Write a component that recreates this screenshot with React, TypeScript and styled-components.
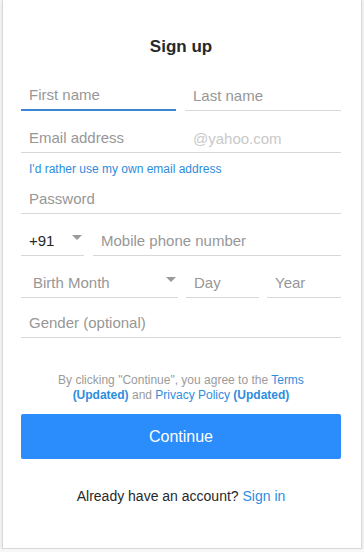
import React from 'react';
import styled, { createGlobalStyle } from 'styled-components';

const GlobalStyle = createGlobalStyle`
  html, body {
    margin: 0;
    padding: 0;
    background: #f7f7f7;
  }
  body {
    font-family: "Liberation Sans", Arial, sans-serif;
    color: #26282a;
  }
  * { box-sizing: border-box; }
`;

const Card = styled.div`
  width: 360px;
  height: 549px;
  margin: 0 0 0 2px;
  background: #fff;
  border: 1px solid #d9d9d9;
  border-top: none;
  box-shadow: 0 1px 3px rgba(0, 0, 0, 0.12);
  padding: 37px 20px 0 18px;
  display: flex;
  flex-direction: column;
`;

const Title = styled.h1`
  margin: 0;
  font-size: 17px;
  line-height: 20px;
  font-weight: 700;
  text-align: center;
  color: #26282a;
`;

const Row = styled.div<{ $top: number }>`
  display: flex;
  margin-top: ${p => p.$top}px;
  gap: 9px;
`;

const Field = styled.div<{ $width?: number; $focused?: boolean }>`
  position: relative;
  flex: ${p => (p.$width ? `0 0 ${p.$width}px` : '1 1 auto')};
  height: 35px;
  border-bottom: ${p => (p.$focused ? '2px solid #3b86d6' : '1px solid #d8d8d8')};
`;

const Input = styled.input`
  width: 100%;
  height: 100%;
  border: none;
  outline: none;
  background: transparent;
  padding: 4px 8px 0;
  font-family: "Liberation Sans", Arial, sans-serif;
  font-size: 15px;
  color: #26282a;
  &::placeholder {
    color: #979797;
  }
`;

const Domain = styled.span`
  position: absolute;
  left: 172px;
  top: 12px;
  font-size: 15px;
  color: #c9c9c9;
`;

const SelectBox = styled.div<{ $indent: number; $dark?: boolean }>`
  height: 100%;
  display: flex;
  align-items: center;
  justify-content: space-between;
  padding: 4px 0 0 ${p => p.$indent}px;
  padding-right: ${p => (p.$dark ? 2 : 2)}px;
  font-size: 15px;
  color: ${p => (p.$dark ? '#26282a' : '#979797')};
`;

const Caret = () => (
  <svg width="10" height="6" viewBox="0 0 10 6" style={{ marginTop: -4 }}>
    <path d="M0 0 L10 0 L5 5 Z" fill="#9a9a9a" />
  </svg>
);

const AltLink = styled.a`
  display: block;
  margin-top: 8px;
  padding-left: 8px;
  font-size: 12px;
  line-height: 16px;
  color: #2e8ddd;
  text-decoration: none;
`;

const Terms = styled.p`
  margin: 35px auto 0;
  width: 270px;
  font-size: 12px;
  line-height: 15px;
  text-align: center;
  color: #9b9b9b;
`;

const TermsLink = styled.a<{ $bold?: boolean }>`
  color: #2e8ddd;
  text-decoration: none;
  font-weight: ${p => (p.$bold ? 700 : 400)};
`;

const ContinueButton = styled.button`
  margin-top: 11px;
  width: 100%;
  height: 45px;
  border: none;
  border-radius: 2px;
  background: #2b8cfb;
  color: #fff;
  font-family: "Liberation Sans", Arial, sans-serif;
  font-size: 16px;
  cursor: pointer;
`;

const SignIn = styled.p`
  margin: 28px 0 0;
  font-size: 14px;
  line-height: 18px;
  text-align: center;
  color: #26282a;
  a {
    color: #2e8ddd;
    text-decoration: none;
  }
`;

export default function App() {
  return (
    <>
      <GlobalStyle />
      <Card>
        <Title>Sign up</Title>

        <Row $top={19}>
          <Field $width={155} $focused>
            <Input placeholder="First name" />
          </Field>
          <Field>
            <Input placeholder="Last name" />
          </Field>
        </Row>

        <Row $top={7}>
          <Field>
            <Input placeholder="Email address" />
            <Domain>@yahoo.com</Domain>
          </Field>
        </Row>
        <AltLink href="#">I'd rather use my own email address</AltLink>

        <Row $top={2}>
          <Field>
            <Input type="password" placeholder="Password" />
          </Field>
        </Row>

        <Row $top={7}>
          <Field $width={63}>
            <SelectBox $indent={8} $dark>
              +91
              <Caret />
            </SelectBox>
          </Field>
          <Field>
            <Input placeholder="Mobile phone number" />
          </Field>
        </Row>

        <Row $top={7} style={{ gap: 8 }}>
          <Field $width={157}>
            <SelectBox $indent={12}>
              Birth Month
              <Caret />
            </SelectBox>
          </Field>
          <Field $width={73}>
            <Input placeholder="Day" />
          </Field>
          <Field>
            <Input placeholder="Year" />
          </Field>
        </Row>

        <Row $top={5}>
          <Field>
            <Input placeholder="Gender (optional)" />
          </Field>
        </Row>

        <Terms>
          By clicking "Continue", you agree to the <TermsLink href="#">Terms</TermsLink>{' '}
          <TermsLink href="#" $bold>(Updated)</TermsLink> and{' '}
          <TermsLink href="#">Privacy Policy</TermsLink>{' '}
          <TermsLink href="#" $bold>(Updated)</TermsLink>
        </Terms>

        <ContinueButton>Continue</ContinueButton>

        <SignIn>
          Already have an account? <a href="#">Sign in</a>
        </SignIn>
      </Card>
    </>
  );
}
